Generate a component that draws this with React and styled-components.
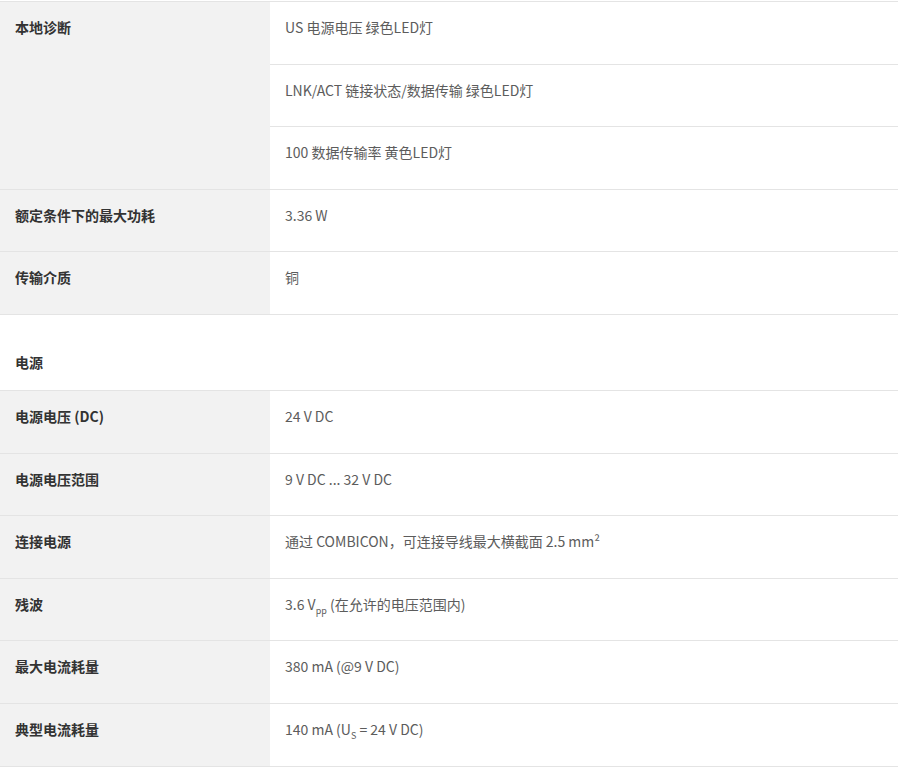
import styled, { createGlobalStyle } from "styled-components";

const GlobalStyle = createGlobalStyle`
    body {
        margin: 0;
        background: #FFF;
        font-family: "Noto Sans CJK SC", "Noto Sans", sans-serif;
    }
`;

const diagnostics = [
    "US 电源电压 绿色LED灯",
    "LNK/ACT 链接状态/数据传输 绿色LED灯",
    "100 数据传输率 黄色LED灯",
];

const general = [
    { label: "额定条件下的最大功耗", value: "3.36 W" },
    { label: "传输介质", value: "铜" },
];

const power = [
    { label: "电源电压 (DC)", value: "24 V DC" },
    { label: "电源电压范围", value: "9 V DC ... 32 V DC" },
    { label: "连接电源", value: <>通过 COMBICON，可连接导线最大横截面 2.5 mm²</> },
    { label: "残波", value: <>3.6 V<sub>pp</sub> (在允许的电压范围内)</> },
    { label: "最大电流耗量", value: "380 mA (@9 V DC)" },
    { label: "典型电流耗量", value: <>140 mA (U<sub>S</sub> = 24 V DC)</> },
];

export default function App() {
    return (
        <>
            <GlobalStyle />
            <Page>
                <Table>
                    <tbody>
                        {diagnostics.map((d, i) => (
                            <Row key={i}>
                                {i === 0 && <Label rowSpan={diagnostics.length}>本地诊断</Label>}
                                <Value>{d}</Value>
                            </Row>
                        ))}
                        {general.map((r, i) => (
                            <Row key={i}>
                                <Label>{r.label}</Label>
                                <Value>{r.value}</Value>
                            </Row>
                        ))}
                    </tbody>
                </Table>
                <Section>电源</Section>
                <Table>
                    <tbody>
                        {power.map((r, i) => (
                            <Row key={i}>
                                <Label>{r.label}</Label>
                                <Value>{r.value}</Value>
                            </Row>
                        ))}
                    </tbody>
                </Table>
            </Page>
        </>
    );
}

const Page = styled.div`
    width: 898px;
    padding-top: 1px;
`;

const Table = styled.table`
    width: 100%;
    border-collapse: collapse;
    border-top: 1px solid #E4E4E4;
    font-size: 14px;
    line-height: 20px;
`;

const Row = styled.tr`
    height: 62.6px;
    border-bottom: 1px solid #E4E4E4;
`;

const Label = styled.td`
    width: 270px;
    box-sizing: border-box;
    background: #F2F2F2;
    padding: 15px 15px 0;
    vertical-align: top;
    font-weight: bold;
    color: #333;
`;

const Value = styled.td`
    padding: 15px 15px 0;
    vertical-align: top;
    color: #5C5C5C;
    sub {
        font-size: 9px;
        line-height: 0;
    }
`;

const Section = styled.div`
    height: 75px;
    box-sizing: border-box;
    padding: 37px 15px 0;
    font-size: 14px;
    line-height: 20px;
    font-weight: bold;
    color: #333;
`;
